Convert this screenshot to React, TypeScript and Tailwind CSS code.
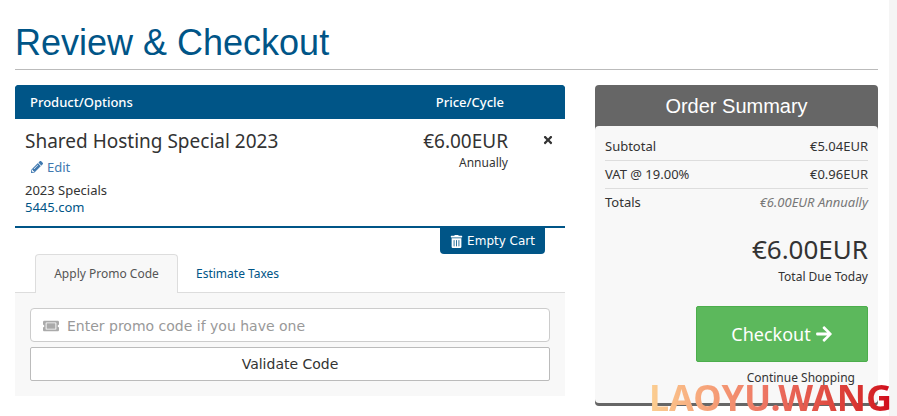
import { useState } from 'react';
import { FaArrowRight, FaPencilAlt, FaTicketAlt, FaTimes, FaTrashAlt } from 'react-icons/fa';

const totals = [
  { label: 'Subtotal', value: '€5.04EUR' },
  { label: 'VAT @ 19.00%', value: '€0.96EUR' },
];

function CartTable() {
  return (
    <table className="w-full border-separate border-spacing-0 border-b-2 border-[#005587]">
      <thead>
        <tr className="h-[34px] bg-[#005587] text-[13px] text-white">
          <th className="rounded-tl bg-[#005587] px-[15px] pt-px text-left font-medium">Product/Options</th>
          <th className="w-[120px] pt-px pr-1 text-right font-medium">Price/Cycle</th>
          <th className="w-[57px] rounded-tr bg-[#005587]" aria-label="Remove" />
        </tr>
      </thead>
      <tbody>
        <tr className="align-top">
          <td className="px-2.5 pt-2.5 pb-2.5">
            <p className="text-[19px] leading-6 text-[#333]">Shared Hosting Special 2023</p>
            <button type="button" className="mt-1 ml-1.5 flex items-center gap-1 text-[13px] leading-5 text-[#4079b0]">
              <FaPencilAlt className="size-3" />
              Edit
            </button>
            <p className="mt-1 text-[13px] leading-[18px] text-[#333]">2023 Specials</p>
            <p className="text-[13px] leading-[17px] text-[#005587]">5445.com</p>
          </td>
          <td className="pt-2.5 text-right">
            <p className="text-[19px] leading-6 text-[#333]">€6.00EUR</p>
            <p className="text-xs leading-5 text-[#333]">Annually</p>
          </td>
          <td className="pt-[15px] pr-[11px]">
            <button type="button" aria-label="Remove item" className="ml-auto block text-[#333]">
              <FaTimes className="size-3" />
            </button>
          </td>
        </tr>
      </tbody>
    </table>
  );
}

function PromoTabs() {
  const [code, setCode] = useState('');

  return (
    <section>
      <div role="tablist" className="flex border-b border-[#ddd] px-5 text-xs">
        <button
          type="button"
          role="tab"
          aria-selected="true"
          className="-mb-px h-[39px] w-[143px] rounded-t border border-b-0 border-[#ddd] bg-[#f8f8f8] text-[#555]"
        >
          Apply Promo Code
        </button>
        <button type="button" role="tab" aria-selected="false" className="px-[18px] pt-0.5 text-[#005587]">
          Estimate Taxes
        </button>
      </div>
      <form
        onSubmit={(e) => e.preventDefault()}
        className="bg-[#f8f8f8] p-[15px] font-['DejaVu_Sans',sans-serif] text-sm"
      >
        <label className="flex h-[34px] items-center gap-2 rounded border border-[#ccc] bg-white px-3 pt-0.5">
          <FaTicketAlt className="size-4 text-[#aaa]" />
          <input
            value={code}
            onChange={(e) => setCode(e.target.value)}
            aria-label="Promo code"
            placeholder="Enter promo code if you have one"
            className="min-w-0 flex-1 outline-none placeholder:text-[#999]"
          />
        </label>
        <button type="submit" className="mt-[5px] h-[34px] w-full rounded-xs border border-[#bbb] bg-white text-[#333]">
          Validate Code
        </button>
      </form>
    </section>
  );
}

function OrderSummary() {
  return (
    <aside className="rounded bg-[#666] pb-[3px]">
      <h2 className="pt-[7px] pb-[5px] text-center font-['Liberation_Sans',sans-serif] text-xl leading-[29px] text-white">
        Order Summary
      </h2>
      <div className="rounded bg-[#f8f8f8] px-2.5 pt-[7px] pb-[15px] text-[#333]">
        <dl className="text-[13px]">
          {totals.map((row) => (
            <div key={row.label} className="flex justify-between border-b border-[#ddd] leading-[27px]">
              <dt>{row.label}</dt>
              <dd>{row.value}</dd>
            </div>
          ))}
          <div className="flex justify-between leading-[27px]">
            <dt>Totals</dt>
            <dd className="text-[#777] italic">€6.00EUR Annually</dd>
          </div>
        </dl>
        <div className="mt-[15px] text-right">
          <p className="text-[26px] leading-9">€6.00EUR</p>
          <p className="mt-0.5 text-xs leading-4">Total Due Today</p>
        </div>
        <div className="mt-[21px] flex flex-col items-end">
          <button
            type="button"
            className="flex h-14 w-[172px] items-center justify-center gap-1 rounded-xs border border-[#4cae4c] bg-[#5cb85c] text-lg text-white"
          >
            Checkout
            <FaArrowRight className="size-[18px]" />
          </button>
          <a href="#" className="mt-1.5 mr-[13px] text-xs leading-5">
            Continue Shopping
          </a>
        </div>
      </div>
    </aside>
  );
}

export default function App() {
  return (
    <div className="relative flex min-h-screen bg-white font-['Noto_Sans',sans-serif]">
      <main className="min-w-0 flex-1 pt-[21px] pr-[11px] pl-[15px]">
        <h1 className="border-b border-[#bbb] pb-[5px] font-['Liberation_Sans',sans-serif] text-4xl leading-[43px] text-[#005587]">
          Review &amp; Checkout
        </h1>
        <div className="mt-[15px] grid grid-cols-[550fr_283fr] items-start gap-[30px]">
          <div>
            <CartTable />
            <div className="flex justify-end pr-5">
              <button
                type="button"
                className="flex h-[26px] items-center gap-1 rounded-b bg-[#005587] px-2.5 font-['DejaVu_Sans',sans-serif] text-xs text-white"
              >
                <FaTrashAlt className="size-[13px]" />
                Empty Cart
              </button>
            </div>
            <PromoTabs />
          </div>
          <OrderSummary />
        </div>
      </main>
      <div className="w-2 bg-[#f5f5f5]" />
      <p className="absolute right-[5px] bottom-0 bg-linear-to-r from-[#fbcf92] via-[#ec7060] to-[#d0021b] bg-clip-text text-4xl leading-9 font-bold text-transparent">
        LAOYU.WANG
      </p>
    </div>
  );
}
